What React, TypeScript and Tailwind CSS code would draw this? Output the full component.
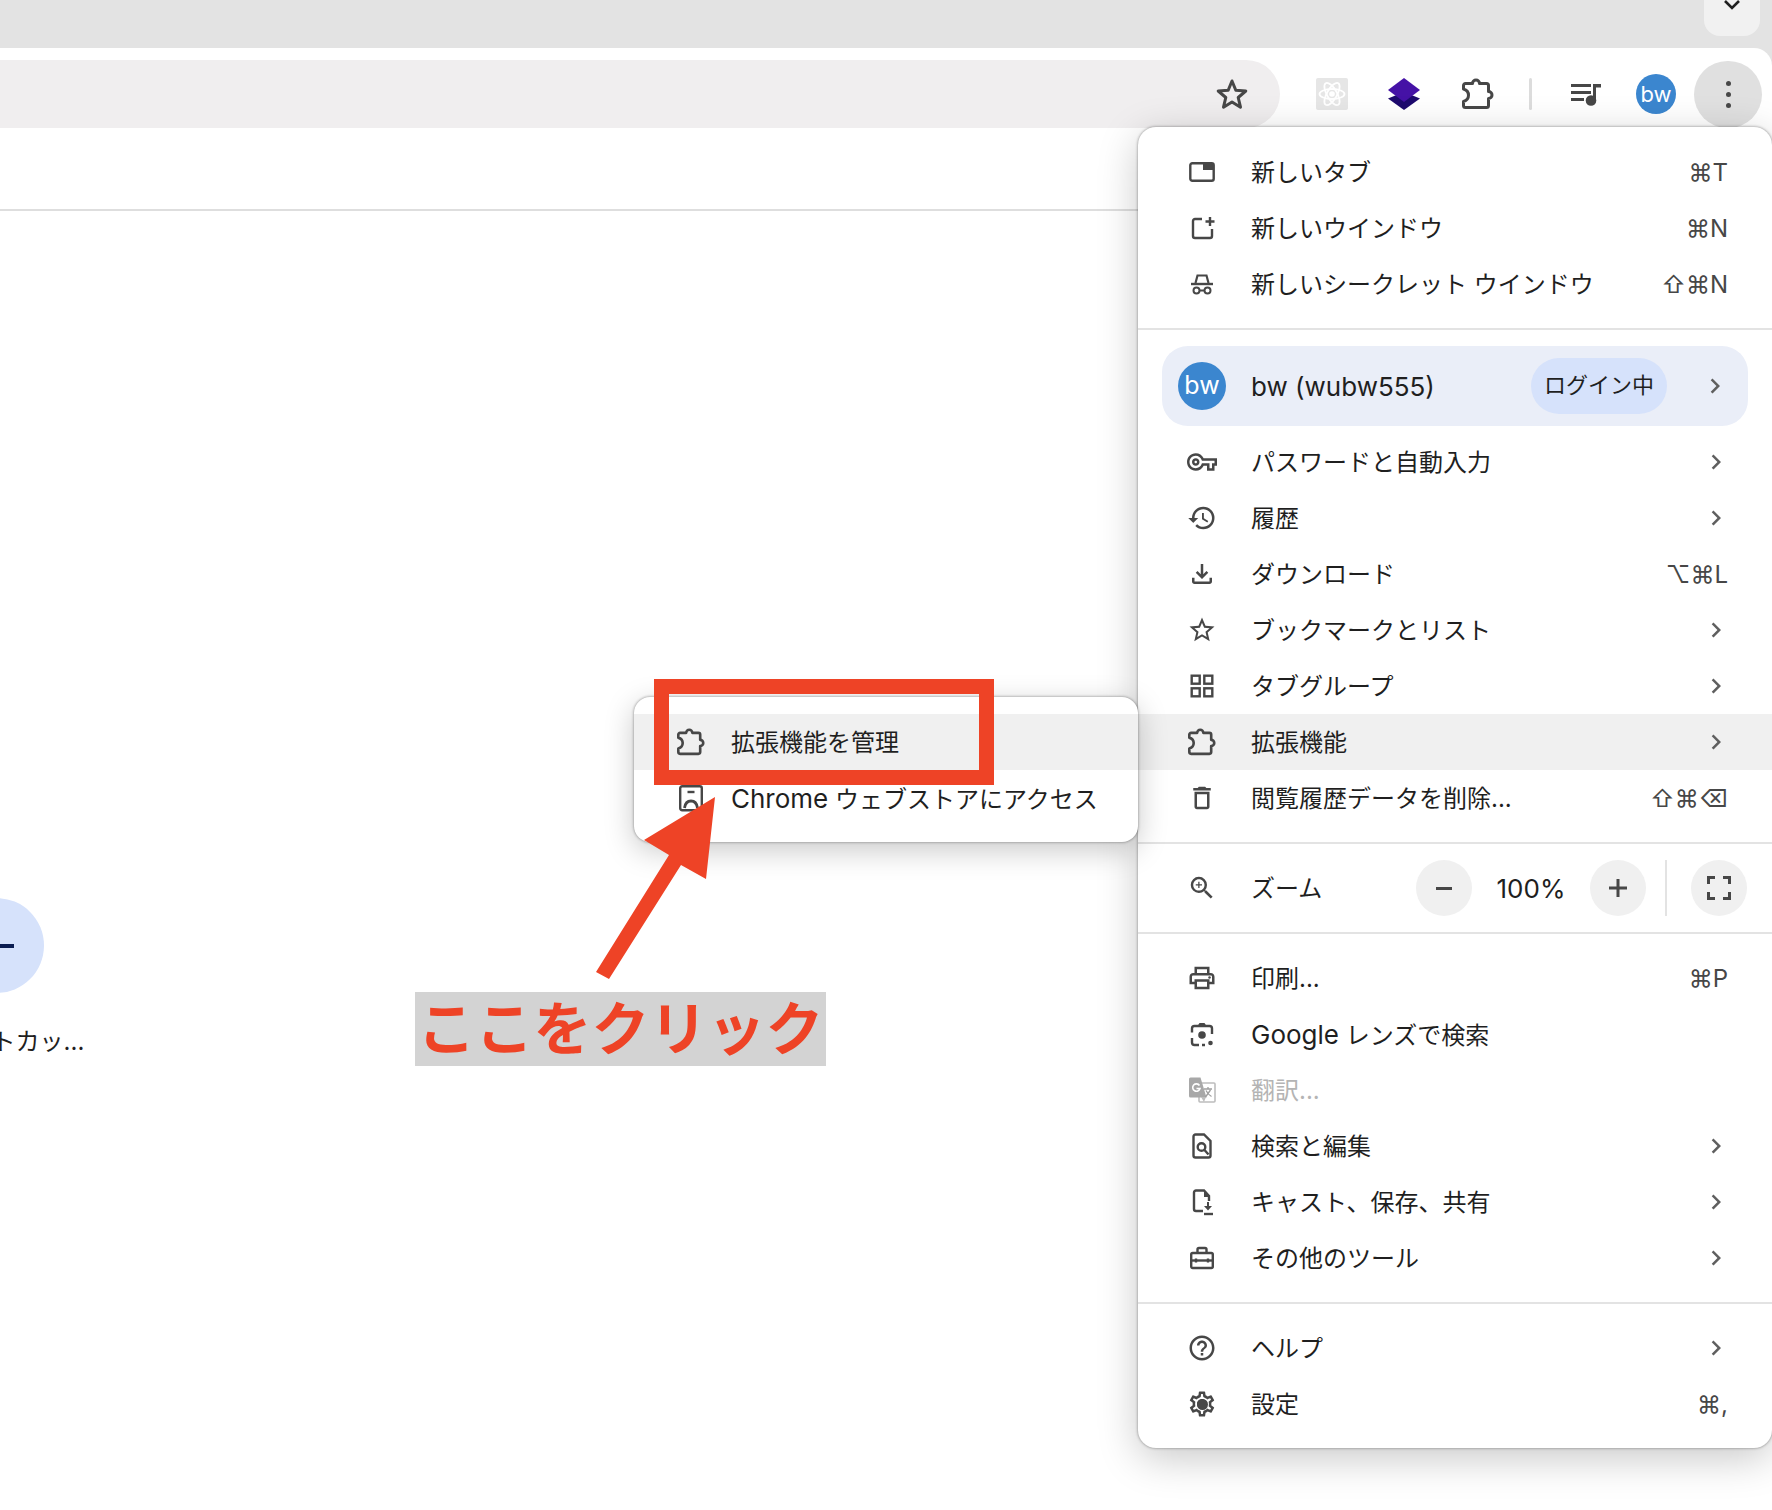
import React from 'react';
import {
  MdChevronRight,
  MdHistory,
  MdOutlineDelete,
  MdOutlineFileDownload,
  MdOutlinePrint,
  MdOutlineSettings,
  MdOutlineVpnKey,
  MdOutlineZoomIn,
  MdHelpOutline,
  MdStarBorder,
} from 'react-icons/md';

const ICON = '#474747';

const Svg: React.FC<{ size?: number; box?: number; children: React.ReactNode }> = ({ size = 28, box = 28, children }) => (
  <svg width={size} height={size} viewBox={`0 0 ${box} ${box}`} fill="none" stroke={ICON} strokeWidth={2.4}>
    {children}
  </svg>
);

const Puzzle: React.FC<{ size?: number }> = ({ size = 28 }) => (
  <svg width={size} height={size} viewBox="0 0 32 32" fill="none" stroke={ICON} strokeWidth={3} strokeLinejoin="round">
    <path d="M1.500 7.500a2 2 0 0 1 2-2H10.500a3.500 3.500 0 0 1 7 0H24.500a2 2 0 0 1 2 2V13.500a3.500 3.500 0 0 1 0 7V27.500a2 2 0 0 1-2 2H3.500a2 2 0 0 1-2-2V23.500q5-1.500 5-6.250T1.500 11z" />
  </svg>
);

const NewTab = () => (
  <Svg>
    <rect x="2.300" y="5.200" width="23.400" height="17.600" rx="2" />
    <rect x="15" y="5" width="11" height="7" fill={ICON} stroke="none" />
  </Svg>
);
const NewWindow = () => (
  <Svg>
    <path d="M14 5H7a2 2 0 0 0-2 2v15a2 2 0 0 0 2 2h15a2 2 0 0 0 2-2v-7" />
    <path d="M22 3v9M17.500 7.500h9" />
  </Svg>
);
const Incognito = () => (
  <Svg>
    <path d="M7.500 13l2-7.500h9l2 7.500" strokeWidth={2.200} />
    <path d="M3 14h22" />
    <circle cx="8.500" cy="20.500" r="3" strokeWidth={2} />
    <circle cx="19.500" cy="20.500" r="3" strokeWidth={2} />
    <path d="M11.500 20.500h5" strokeWidth={2} />
  </Svg>
);
const TabGroups = () => (
  <Svg>
    <rect x="3.700" y="3.700" width="8" height="8" />
    <rect x="16.300" y="3.700" width="8" height="8" />
    <rect x="3.700" y="16.300" width="8" height="8" />
    <rect x="16.300" y="16.300" width="8" height="8" />
  </Svg>
);
const Lens = () => (
  <Svg>
    <path d="M9.500 6l2-3h5l2 3z" fill={ICON} stroke="none" />
    <path d="M4 12.500V8.500A2.500 2.500 0 0 1 6.500 6h15A2.500 2.500 0 0 1 24 8.500V14M4 18v4.500A2.500 2.500 0 0 0 6.500 25H11M14 25h3" />
    <circle cx="14" cy="15" r="3.800" fill={ICON} stroke="none" />
    <circle cx="22.500" cy="23" r="2.300" fill={ICON} stroke="none" />
  </Svg>
);
const Translate = () => (
  <svg width="28" height="28" viewBox="0 0 28 28">
    <rect x="11" y="7" width="16" height="19" rx="1" fill="#fff" stroke="#bdbdbd" strokeWidth="1.600" />
    <path d="M2.500 1.500h10l6 20h-16a1.500 1.500 0 0 1-1.500-1.500V3a1.500 1.500 0 0 1 1.500-1.500z" fill="#a8a8a8" />
    <path d="M13 21l3 5 2-5z" fill="#bdbdbd" />
    <path d="M11.500 9.500a3.700 3.700 0 1 0 .500 3H8.500" fill="none" stroke="#fff" strokeWidth="1.600" />
    <path d="M16 13h8M20 11v2M17.500 21l5-7M18 14.500q2 4 5.500 6" fill="none" stroke="#9e9e9e" strokeWidth="1.300" />
  </svg>
);
const FindInPage = () => (
  <Svg>
    <path d="M16 2.500H7.500a2 2 0 0 0-2 2v19a2 2 0 0 0 2 2h13a2 2 0 0 0 2-2V9z" />
    <circle cx="13.500" cy="15" r="3.800" />
    <path d="M16.500 18l4 4.500" />
  </Svg>
);
const Cast = () => (
  <Svg>
    <path d="M15 23H8a2 2 0 0 1-2-2V4.500a2 2 0 0 1 2-2h8L21 8v5" />
    <path d="M16 8.500V2.500L22 9h-6z" fill={ICON} stroke="none" />
    <path d="M20 14v5" strokeWidth={2} />
    <path d="M16 18l4 4.500 4-4.500z" fill={ICON} stroke="none" />
    <path d="M16 26h9" />
  </Svg>
);
const Toolbox = () => (
  <Svg>
    <rect x="3.200" y="9" width="21.600" height="15" rx="1.500" />
    <path d="M9.500 9V5.500a1.500 1.500 0 0 1 1.500-1.500h6a1.500 1.500 0 0 1 1.500 1.500V9" />
    <path d="M3 16.500h22" />
    <path d="M8 14.500v4M20 14.500v4" />
  </Svg>
);
const Store = () => (
  <Svg>
    <rect x="3.200" y="2.200" width="21.600" height="24" rx="2" />
    <path d="M10.500 8h7" />
    <path d="M7.500 24q1-7 6.500-7t6.500 7" strokeWidth={2.800} />
  </Svg>
);
const Gear = () => (
  <span className="relative flex items-center justify-center">
    <MdOutlineSettings size={30} color={ICON} />
    <span className="absolute h-[11px] w-[11px] rounded-full bg-[#474747]" />
  </span>
);

type Row = { label: React.ReactNode; id: string; icon: React.ReactNode; shortcut?: string; arrow?: boolean; active?: boolean; disabled?: boolean };

const GROUP_1: Row[] = [
  { id: 'tab', label: '新しいタブ', icon: <NewTab />, shortcut: '⌘T' },
  { id: 'window', label: '新しいウインドウ', icon: <NewWindow />, shortcut: '⌘N' },
  { id: 'incognito', label: '新しいシークレット ウインドウ', icon: <Incognito />, shortcut: '⇧⌘N' },
];
const GROUP_2: Row[] = [
  { id: 'password', label: 'パスワードと自動入力', icon: <MdOutlineVpnKey size={30} color={ICON} />, arrow: true },
  { id: 'history', label: '履歴', icon: <MdHistory size={30} color={ICON} />, arrow: true },
  { id: 'download', label: 'ダウンロード', icon: <MdOutlineFileDownload size={30} color={ICON} />, shortcut: '⌥⌘L' },
  { id: 'bookmark', label: 'ブックマークとリスト', icon: <MdStarBorder size={30} color={ICON} />, arrow: true },
  { id: 'groups', label: 'タブグループ', icon: <TabGroups />, arrow: true },
  { id: 'ext', label: '拡張機能', icon: <Puzzle />, arrow: true, active: true },
  { id: 'clear', label: '閲覧履歴データを削除...', icon: <MdOutlineDelete size={30} color={ICON} />, shortcut: '⇧⌘⌫' },
];
const GROUP_3: Row[] = [
  { id: 'print', label: '印刷...', icon: <MdOutlinePrint size={30} color={ICON} />, shortcut: '⌘P' },
  { id: 'lens', label: <><span className="text-[26px]">Google</span> レンズで検索</>, icon: <Lens /> },
  { id: 'translate', label: '翻訳...', icon: <Translate />, disabled: true },
  { id: 'find', label: '検索と編集', icon: <FindInPage />, arrow: true },
  { id: 'cast', label: 'キャスト、保存、共有', icon: <Cast />, arrow: true },
  { id: 'tools', label: 'その他のツール', icon: <Toolbox />, arrow: true },
];
const GROUP_4: Row[] = [
  { id: 'help', label: 'ヘルプ', icon: <MdHelpOutline size={30} color={ICON} />, arrow: true },
  { id: 'settings', label: '設定', icon: <Gear />, shortcut: '⌘,' },
];

const MenuRow: React.FC<{ row: Row }> = ({ row }) => (
  <div className={`flex h-14 items-center pl-[49px] pr-[44px] text-2xl ${row.active ? 'bg-[#f0f0f0]' : ''} ${row.disabled ? 'text-[#b4b4b4]' : 'text-[#1f1f1f]'}`}>
    <span className="flex w-[30px] justify-center">{row.icon}</span>
    <span className="ml-[34px] flex-1 whitespace-nowrap pt-0.5">{row.label}</span>
    {row.shortcut && <span className="pt-0.5 text-[#474747]">{row.shortcut}</span>}
    {row.arrow && <MdChevronRight size={30} color="#5f5f5f" className="mr-[-3px]" />}
  </div>
);

const Divider = () => <div className="my-4 h-0.5 bg-[#e3e3e3]" />;

const RoundBtn: React.FC<{ children: React.ReactNode }> = ({ children }) => (
  <span className="flex h-14 w-14 items-center justify-center rounded-full bg-[#f0f0f0]">{children}</span>
);

export default function App() {
  return (
    <div className="relative h-[1510px] w-[1772px] overflow-hidden bg-white font-['Inter','Noto_Sans_CJK_JP','DejaVu_Sans',sans-serif]">
      {/* tab strip */}
      <div className="bg-[#e3e3e3]">
        <div className="flex h-12 justify-end pr-3">
          <div className="flex h-9 w-14 items-start justify-center rounded-b-2xl bg-[#f1f1f1]">
            <svg width="18" height="12" viewBox="0 0 18 12" fill="none" stroke="#1f1f1f" strokeWidth="2.600"><path d="M2 1l7 7 7-7" /></svg>
          </div>
        </div>
        {/* toolbar */}
        <div className="flex h-20 items-start rounded-tr-[18px] bg-white pt-3">
          <div className="flex h-[68px] w-[1280px] items-center justify-end rounded-r-[34px] bg-[#f0eeef] pr-[30px]">
            <svg width="36" height="36" viewBox="0 0 36 36" fill="none" stroke={ICON} strokeWidth="3" strokeLinejoin="round">
              <path d="M18 5l3.800 9.200 10 .800-7.600 6.500 2.300 9.700L18 25.900l-8.500 5.300 2.300-9.700L4.200 15l10-.800z" />
            </svg>
          </div>
          <div className="flex h-[68px] flex-1 items-center">
            <div className="ml-9 flex h-8 w-8 items-center justify-center rounded-[2px] bg-[#e6e6e6]">
              <svg width="28" height="28" viewBox="0 0 28 28" fill="none" stroke="#fff" strokeWidth="1.800">
                <circle cx="14" cy="14" r="2.800" fill="#fff" stroke="none" />
                <ellipse cx="14" cy="14" rx="12.500" ry="5" />
                <ellipse cx="14" cy="14" rx="12.500" ry="5" transform="rotate(60 14 14)" />
                <ellipse cx="14" cy="14" rx="12.500" ry="5" transform="rotate(120 14 14)" />
              </svg>
            </div>
            <svg className="ml-10" width="32" height="32" viewBox="0 0 32 32">
              <path d="M16 14L32 20.500 16 32 0 20.500z" fill="#1e0a6e" />
              <path d="M16 0l16 12-16 12L0 12z" fill="#4512a6" />
            </svg>
            <span className="ml-[42px] flex"><Puzzle size={32} /></span>
            <span className="ml-[35px] h-8 w-[3px] rounded bg-[#dcdcdc]" />
            <svg className="ml-[38px]" width="32" height="28" viewBox="0 0 32 28" fill={ICON}>
              <path d="M1 4h20v3H1zM1 11h20v3H1zM1 18h13v3H1z" />
              <path d="M23 4h8v3.500h-5V20h-3z" />
              <circle cx="21" cy="20.500" r="5.300" />
            </svg>
            <span className="ml-[34px] flex h-10 w-10 items-center justify-center rounded-full bg-[#3b86cf] text-[22px] text-white">bw</span>
            <span className="ml-[18px] flex h-[67px] w-[68px] flex-col items-center justify-center gap-[6px] rounded-full bg-[#e0e0e0]">
              <span className="h-[5px] w-[5px] rounded-full bg-[#474747]" />
              <span className="h-[5px] w-[5px] rounded-full bg-[#474747]" />
              <span className="h-[5px] w-[5px] rounded-full bg-[#474747]" />
            </span>
          </div>
        </div>
      </div>

      {/* bookmark bar */}
      <div className="h-[83px] border-b-2 border-[#dedede]" />

      {/* page */}
      <div className="ml-[-138px] mt-[687px] flex w-[268px] flex-col items-center">
        <div className="flex h-[95px] w-[95px] items-center justify-center rounded-full bg-[#d6e2fb]">
          <span className="ml-[6px] h-1 w-[30px] bg-[#0b1d51]" />
        </div>
        <span className="ml-[12px] mt-[33px] whitespace-nowrap text-2xl text-[#1f1f1f]">ショートカッ...</span>
      </div>

      {/* chrome menu */}
      <div className="absolute left-[1138px] top-[127px] w-[634px] rounded-[18px] bg-white pb-4 pt-[17px] shadow-[0_10px_40px_rgba(0,0,0,0.22),0_0_3px_rgba(0,0,0,0.45)]">
        {GROUP_1.map((r) => <MenuRow key={r.id} row={r} />)}
        <Divider />
        <div className="ml-6 mr-6 flex h-20 items-center rounded-[26px] bg-[#eaeef8] pl-4 pr-[18px] text-2xl text-[#1f1f1f]">
          <span className="flex h-12 w-12 items-center justify-center rounded-full bg-[#3b86cf] text-[25px] text-white">bw</span>
          <span className="ml-[25px] flex-1 pt-0.5 text-[26px]">bw (wubw555)</span>
          <span className="flex h-14 w-[136px] items-center justify-center rounded-full bg-[#d6e2fb] text-[22px]">ログイン中</span>
          <MdChevronRight size={30} color="#5f5f5f" className="ml-[33px]" />
        </div>
        <div className="h-2" />
        {GROUP_2.map((r) => <MenuRow key={r.id} row={r} />)}
        <Divider />
        <div className="flex h-14 items-center pl-[49px] text-2xl text-[#1f1f1f]">
          <span className="flex w-[30px] justify-center"><MdOutlineZoomIn size={30} color={ICON} /></span>
          <span className="ml-[34px] w-[165px] pt-0.5">ズーム</span>
          <RoundBtn><span className="h-[3px] w-[16px] bg-[#474747]" /></RoundBtn>
          <span className="flex w-[118px] justify-center pt-0.5 text-[26px]">100%</span>
          <RoundBtn>
            <svg width="20" height="20" viewBox="0 0 20 20" stroke="#474747" strokeWidth="3"><path d="M10 1v18M1 10h18" /></svg>
          </RoundBtn>
          <span className="ml-[19px] h-14 w-0.5 bg-[#e3e3e3]" />
          <span className="ml-[24px]">
            <RoundBtn>
              <svg width="24" height="24" viewBox="0 0 24 24" fill="none" stroke="#474747" strokeWidth="3"><path d="M1.500 8V1.500H8M16 1.500h6.500V8M22.500 16v6.500H16M8 22.500H1.500V16" /></svg>
            </RoundBtn>
          </span>
        </div>
        <Divider />
        {GROUP_3.map((r) => <MenuRow key={r.id} row={r} />)}
        <Divider />
        {GROUP_4.map((r) => <MenuRow key={r.id} row={r} />)}
      </div>

      {/* extensions submenu */}
      <div className="absolute left-[634px] top-[697px] w-[504px] rounded-[16px] bg-white pb-4 pt-[17px] text-2xl text-[#1f1f1f] shadow-[0_8px_30px_rgba(0,0,0,0.22),0_0_3px_rgba(0,0,0,0.45)]">
        <div className="flex h-14 items-center bg-[#f0f0f0] pl-[43px]">
          <Puzzle />
          <span className="ml-[26px] pt-0.5">拡張機能を管理</span>
        </div>
        <div className="flex h-14 items-center pl-[43px]">
          <Store />
          <span className="ml-[26px] whitespace-nowrap pt-0.5"><span className="text-[26px]">Chrome</span> ウェブストアにアクセス</span>
        </div>
      </div>

      {/* annotations */}
      <div className="absolute left-[654px] top-[679px] h-[106px] w-[340px] border-[15px] border-[#ee4326]" />
      <svg className="absolute left-[590px] top-[790px]" width="130" height="195" viewBox="0 0 130 195" fill="#ee4326">
        <polygon points="125,7 116,89 91,75 19,189 6,182 79,65 54,50" />
      </svg>
      <div className="absolute left-[415px] top-[992px] flex h-[74px] w-[411px] items-center justify-center bg-[#d3d3d3] text-[58px] font-bold text-[#ee4326]">
        ここをクリック
      </div>
    </div>
  );
}
